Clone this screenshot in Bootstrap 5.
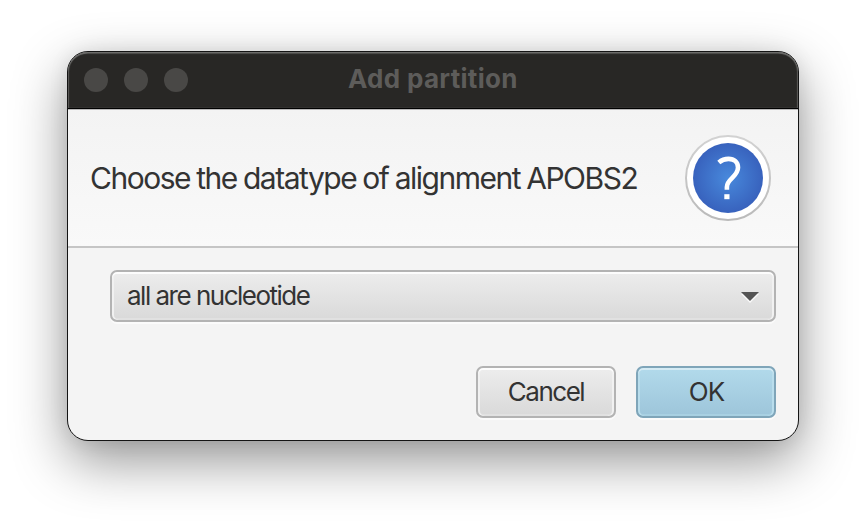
<!DOCTYPE html>
<html lang="en">
<head>
<meta charset="utf-8">
<title>Add partition</title>
<link href="https://cdn.jsdelivr.net/npm/bootstrap@5.3.0/dist/css/bootstrap.min.css" rel="stylesheet">
<style>
body{width:866px;height:524px;background:#fff;color:#333;font-family:Inter,"Liberation Sans",sans-serif;padding:51px 67px}
.window{width:732px;height:390px;border:1px solid #141414;border-radius:21px;background:#f4f4f4;
 box-shadow:0 20px 54px rgba(0,0,0,.42),0 0 20px rgba(0,0,0,.08)}
.titlebar{height:57px;background:#282725;border-bottom:1px solid #000;border-radius:20px 20px 0 0;box-shadow:inset 0 2px 1px -.5px #70706e,inset 1px 0 1px #5b5b59,inset -1px 0 1px #5b5b59;padding-left:16px}
.dot{width:24px;height:24px;border-radius:50%;background:#494846}
.window-title{font-size:26px;line-height:32px;font-weight:700;color:#5d5c5a;letter-spacing:.3px;margin-left:160px;margin-top:-3px}
.prompt{height:139px;border-top:1px solid #b9b9b9;border-bottom:2px solid #c5c5c5;background:linear-gradient(#f3f3f3,#f9f9f9);padding:0 27px 1px 22px}
.prompt-text{font-size:30px;line-height:36px;letter-spacing:-1.5px;word-spacing:-.7px;white-space:nowrap;padding-top:1px}
.form-area{padding:22px 22px 0 42px}
.control{height:52px;border:2px solid #b3b3b3;border-radius:7px;background:linear-gradient(#ededed,#d9d9d9);
 box-shadow:inset 0 2px #fdfdfd,inset 2px 0 #f1f1f1,inset -2px 0 #f1f1f1,inset 0 -2px #e1e1e1,0 2px #fbfbfb;font-size:26px;line-height:32px;color:#333;letter-spacing:-1.5px}
.choice{padding:2px 14px 0 15px}
.choice-text{margin-top:-2px}
.action{width:140px;padding:0}
.primary-action{letter-spacing:-.8px;padding-left:1px;border-color:#7fa5b9;background:linear-gradient(#b2daeb,#9dc5da);box-shadow:inset 0 2px #d5ebf4,inset 2px 0 #b9ddec,inset -2px 0 #b9ddec,inset 0 -2px #a8d0e2,0 2px #fbfbfb}
.actions{gap:20px;margin-top:44px}
</style>
<script src="https://cdn.jsdelivr.net/npm/bootstrap@5.3.0/dist/js/bootstrap.bundle.min.js"></script>
</head>
<body class="overflow-hidden">
<main class="window">
 <header class="titlebar d-flex align-items-center">
  <div class="d-flex gap-3"><span class="dot"></span><span class="dot"></span><span class="dot"></span></div>
  <h1 class="window-title mb-0">Add partition</h1>
 </header>
 <section class="prompt d-flex justify-content-between align-items-center">
  <div class="prompt-text">Choose the datatype of alignment APOBS2</div>
  <svg width="86" height="86" viewBox="0 0 86 86" class="flex-shrink-0" aria-hidden="true">
   <defs>
    <radialGradient id="blue"><stop stop-color="#4889dc"/><stop offset="1" stop-color="#3862bd"/></radialGradient>
    <linearGradient id="rim" x2="0" y2="1"><stop stop-color="#d2d2d2"/><stop offset="1" stop-color="#bababa"/></linearGradient>
   </defs>
   <circle cx="43" cy="43" r="42" fill="#fff" stroke="url(#rim)" stroke-width="2"/>
   <circle cx="43" cy="43" r="35" fill="url(#blue)"/>
   <path d="M33.8 27.5C36.5 25.2 39.5 23.9 43.5 23.9C49.3 23.9 53 27.2 53 32.6C53 42 41.9 43.5 41.9 52V54.7" fill="none" stroke="#fff" stroke-width="4.6"/>
   <path d="M39.3 59.2h5.2v5h-5.2z" fill="#fff"/>
  </svg>
 </section>
 <section class="form-area">
  <button class="control choice w-100 d-flex justify-content-between align-items-center" type="button">
   <span class="choice-text">all are nucleotide</span>
   <svg width="20" height="12" viewBox="0 0 20 12" aria-hidden="true"><path d="M1 3l9 9 9-9z" fill="#fafafa"/><path d="M1 1h18l-9 9z" fill="#555"/></svg>
  </button>
  <div class="actions d-flex justify-content-end">
   <button class="control action" type="button">Cancel</button>
   <button class="control action primary-action" type="button">OK</button>
  </div>
 </section>
</main>
</body>
</html>
